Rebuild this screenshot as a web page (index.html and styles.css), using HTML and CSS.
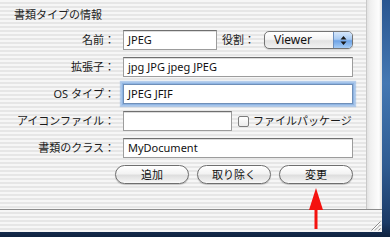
FILE: index.html
```html
<!DOCTYPE html>
<html lang="ja">
<head>
<meta charset="utf-8">
<title>書類タイプの情報</title>
<link rel="stylesheet" href="styles.css">
</head>
<body>
<div class="window">
  <div class="main">
    <div class="content">
      <div class="title">書類タイプの情報</div>
      <div class="form">
        <div class="lbl">名前：</div>
        <div class="field">
          <div class="input w-name">JPEG</div>
          <div class="lbl-inline">役割：</div>
          <div class="popup">
            <span class="popup-text">Viewer</span>
            <span class="popup-arrows">
              <svg width="7" height="11" viewBox="0 0 7 11"><path d="M3.5 1 L6.5 4.5 H0.5 Z M3.5 10 L6.5 6.5 H0.5 Z" fill="#1a1a1a"/></svg>
            </span>
          </div>
        </div>

        <div class="lbl">拡張子：</div>
        <div class="field"><div class="input grow">jpg JPG jpeg JPEG</div></div>

        <div class="lbl">OS タイプ：</div>
        <div class="field"><div class="input grow focused">JPEG JFIF</div></div>

        <div class="lbl">アイコンファイル：</div>
        <div class="field">
          <div class="input w-icon"></div>
          <span class="checkbox"></span>
          <span class="check-label">ファイルパッケージ</span>
        </div>

        <div class="lbl">書類のクラス：</div>
        <div class="field"><div class="input grow">MyDocument</div></div>
      </div>
      <div class="buttons">
        <div class="btn">追加</div>
        <div class="btn">取り除く</div>
        <div class="btn">変更</div>
      </div>
    </div>
    <div class="edge"></div>
  </div>
  <div class="divider"></div>
  <div class="statusbar">
    <svg class="grip" width="11" height="11" viewBox="0 0 11 11">
      <path d="M10.5 1.5 L1.5 10.5 M10.5 5 L5 10.5 M10.5 8.5 L8.5 10.5" stroke="#8a8a8a" stroke-width="1"/>
      <path d="M10.5 2.5 L2.5 10.5 M10.5 6 L6 10.5" stroke="#ffffff" stroke-width="1"/>
    </svg>
  </div>
</div>
<svg class="arrow" width="16" height="42" viewBox="0 0 16 42">
  <path d="M8 0 L15 22 H9.5 V41 H6.5 V22 H1 Z" fill="#f4120f"/>
</svg>
</body>
</html>
```

FILE: styles.css
```css
html, body {
  margin: 0;
  padding: 0;
}

body {
  width: 390px;
  height: 237px;
  overflow: hidden;
  position: relative;
  background: linear-gradient(to bottom, #2a5690 0%, #4578b3 35%, #2f5b91 70%, #1b3a66 94%, #10233f 100%);
  font-family: "Noto Sans", "Noto Sans CJK JP", sans-serif;
  font-size: 11px;
  color: #1a1a1a;
}

.window {
  width: 382px;
  height: 232px;
  display: grid;
  grid-template-rows: 209px 1px 22px;
}

.main {
  display: flex;
}

.content {
  width: 367px;
  padding-top: 8px;
  box-sizing: border-box;
  background: repeating-linear-gradient(to bottom, #f6f6f6 0, #f6f6f6 2px, #e6e6e6 2px, #e6e6e6 4px);
  border-right: 1px solid #c9c9c9;
}

.edge {
  flex: 1;
  background: linear-gradient(to right, #e2e2e2 0, #efefef 3px, #f7f7f7 8px, #fdfdfd 12px, #e6e6e6 14px);
}

.title {
  padding-left: 14px;
  height: 14px;
  line-height: 14px;
  color: #222;
}

.form {
  margin-top: 8px;
  display: grid;
  grid-template-columns: 115px 230px;
  grid-auto-rows: 20px;
  column-gap: 8px;
  row-gap: 7px;
}

.lbl {
  text-align: right;
  line-height: 20px;
  white-space: nowrap;
  color: #1a1a1a;
}

.field {
  display: flex;
  align-items: center;
}

.input {
  height: 20px;
  box-sizing: border-box;
  border: 1px solid #9c9c9c;
  border-top-color: #6f6f6f;
  background: #fff;
  box-shadow: inset 0 1px 0 #dcdcdc;
  padding-left: 4px;
  line-height: 18px;
  color: #111;
  white-space: nowrap;
}

.grow {
  flex: 1;
}

.w-name {
  width: 94px;
}

.w-icon {
  width: 109px;
}

.focused {
  border-color: #6f8fb8;
  box-shadow: 0 0 0 1px #8fb4e2, 0 0 0 2px #a8c6ea, 0 0 1px 3px rgba(140, 180, 230, 0.6);
}

.lbl-inline {
  margin-left: 5px;
  width: 33px;
  white-space: nowrap;
  line-height: 20px;
}

.popup {
  margin-left: 9px;
  width: 89px;
  height: 18px;
  box-sizing: border-box;
  border: 1px solid #747474;
  border-radius: 5px;
  display: flex;
  overflow: hidden;
  background: linear-gradient(to bottom, #ffffff 0%, #f4f4f4 45%, #e2e2e2 55%, #f2f2f2 100%);
  box-shadow: 0 1px 1px rgba(0, 0, 0, 0.15);
}

.popup-text {
  flex: 1;
  padding-left: 9px;
  font-size: 12px;
  line-height: 16px;
  color: #111;
}

.popup-arrows {
  width: 18px;
  border-left: 1px solid #6c8fbf;
  display: flex;
  align-items: center;
  justify-content: center;
  background: linear-gradient(to bottom, #d6e7fb 0%, #a9cbf3 45%, #6ea3e6 55%, #a6cdf7 100%);
}

.checkbox {
  margin-left: 6px;
  width: 11px;
  height: 11px;
  box-sizing: border-box;
  border: 1px solid #7d7d7d;
  border-radius: 2px;
  background: linear-gradient(to bottom, #ffffff 0%, #ececec 100%);
}

.check-label {
  margin-left: 4px;
  white-space: nowrap;
  line-height: 20px;
}

.buttons {
  margin-top: 7px;
  padding-right: 13px;
  display: flex;
  justify-content: flex-end;
  gap: 8px;
}

.btn {
  width: 74px;
  height: 19px;
  box-sizing: border-box;
  border: 1px solid #6e6e6e;
  border-radius: 10px;
  background: linear-gradient(to bottom, #ffffff 0%, #f3f3f3 45%, #dedede 55%, #eeeeee 85%, #fafafa 100%);
  box-shadow: 0 1px 1px rgba(0, 0, 0, 0.2);
  text-align: center;
  line-height: 17px;
  color: #111;
}

.divider {
  background: #8c8c8c;
}

.statusbar {
  display: flex;
  justify-content: flex-end;
  align-items: flex-end;
  padding: 0 1px 1px 0;
  background: repeating-linear-gradient(to bottom, #f6f6f6 0, #f6f6f6 2px, #e6e6e6 2px, #e6e6e6 4px);
}

.grip {
  display: block;
}

.arrow {
  position: absolute;
  left: 308px;
  top: 188px;
}
```
